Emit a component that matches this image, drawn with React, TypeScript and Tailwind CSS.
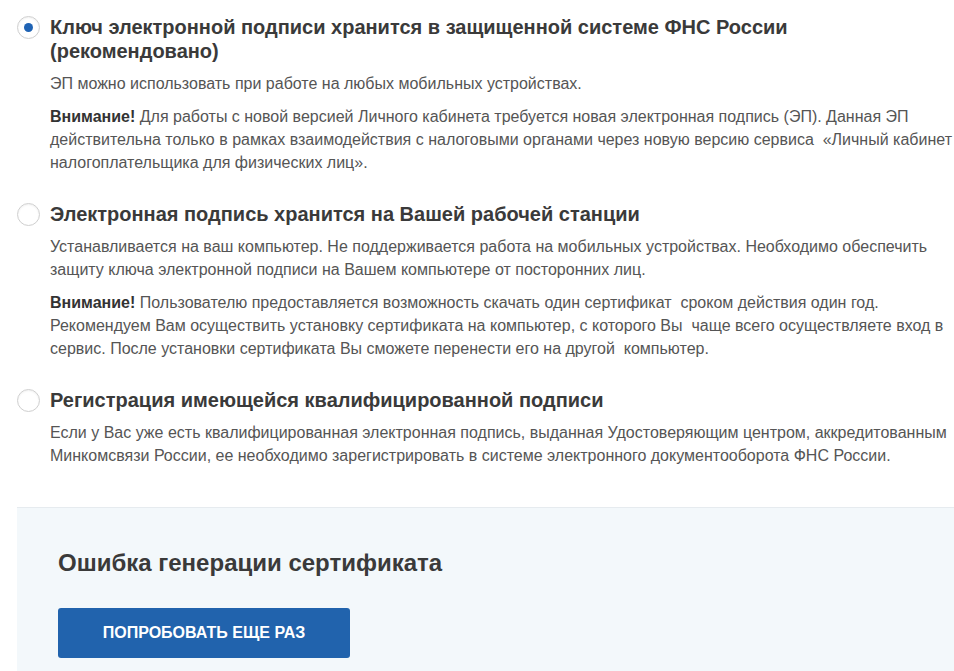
const font = { fontFamily: '"Liberation Sans", Arial, sans-serif' };

function Radio({ checked }: { checked?: boolean }) {
  return (
    <span className="mt-[1px] flex h-[23px] w-[23px] shrink-0 items-center justify-center rounded-full border border-[#cfcfcf] bg-white shadow-[inset_0_1px_2px_rgba(0,0,0,0.06)]">
      {checked && <span className="h-[9px] w-[9px] rounded-full bg-[#1f63b4]" />}
    </span>
  );
}

function Option({
  checked,
  title,
  children,
}: {
  checked?: boolean;
  title: React.ReactNode;
  children: React.ReactNode;
}) {
  return (
    <div className="flex gap-[10px]">
      <Radio checked={checked} />
      <div className="w-[906px]">
        <h3 className="text-[20px] font-bold leading-[24px] text-[#3a3a3a]">{title}</h3>
        <div className="mt-[9px] space-y-[10px] text-[16px] leading-[23px] text-[#555]">
          {children}
        </div>
      </div>
    </div>
  );
}

export default function App() {
  return (
    <div className="h-[671px] w-[954px] overflow-hidden bg-white" style={font}>
      <div className="w-[1000px] pl-[17px] pt-[15px]">
        <div className="space-y-[28px]">
          <Option
            checked
            title={
              <>
                Ключ электронной подписи хранится в защищенной системе ФНС России
                <br />
                (рекомендовано)
              </>
            }
          >
            <p>ЭП можно использовать при работе на любых мобильных устройствах.</p>
            <p>
              <b className="text-[#333]">Внимание!</b> Для работы с новой версией Личного кабинета
              требуется новая электронная подпись (ЭП). Данная ЭП действительна только в рамках
              взаимодействия с налоговыми органами через новую версию сервиса&nbsp; «Личный кабинет
              налогоплательщика для физических лиц».
            </p>
          </Option>
          <Option title="Электронная подпись хранится на Вашей рабочей станции">
            <p>
              Устанавливается на ваш компьютер. Не поддерживается работа на мобильных устройствах.
              Необходимо обеспечить защиту ключа электронной подписи на Вашем компьютере от
              посторонних лиц.
            </p>
            <p>
              <b className="text-[#333]">Внимание!</b> Пользователю предоставляется возможность
              скачать один сертификат&nbsp; сроком действия один год. Рекомендуем Вам осуществить
              установку сертификата на компьютер, с которого Вы&nbsp; чаще всего осуществляете вход в
              сервис. После установки сертификата Вы сможете перенести его на другой&nbsp; компьютер.
            </p>
          </Option>
          <Option title="Регистрация имеющейся квалифицированной подписи">
            <p>
              Если у Вас уже есть квалифицированная электронная подпись, выданная Удостоверяющим
              центром, аккредитованным Минкомсвязи России, ее необходимо зарегистрировать в системе
              электронного документооборота ФНС России.
            </p>
          </Option>
        </div>

        <div className="mt-[40px] h-[200px] border-t border-[#e6ebef] bg-[#f3f8fb] pl-[41px] pt-[41px]">
          <h2 className="text-[24px] font-bold leading-[28px] text-[#3a3a3a]">
            Ошибка генерации сертификата
          </h2>
          <button className="mt-[31px] flex h-[50px] w-[292px] items-center justify-center rounded-[3px] bg-[#2163ad] text-[16px] font-bold uppercase text-white">
            Попробовать еще раз
          </button>
        </div>
      </div>
    </div>
  );
}
